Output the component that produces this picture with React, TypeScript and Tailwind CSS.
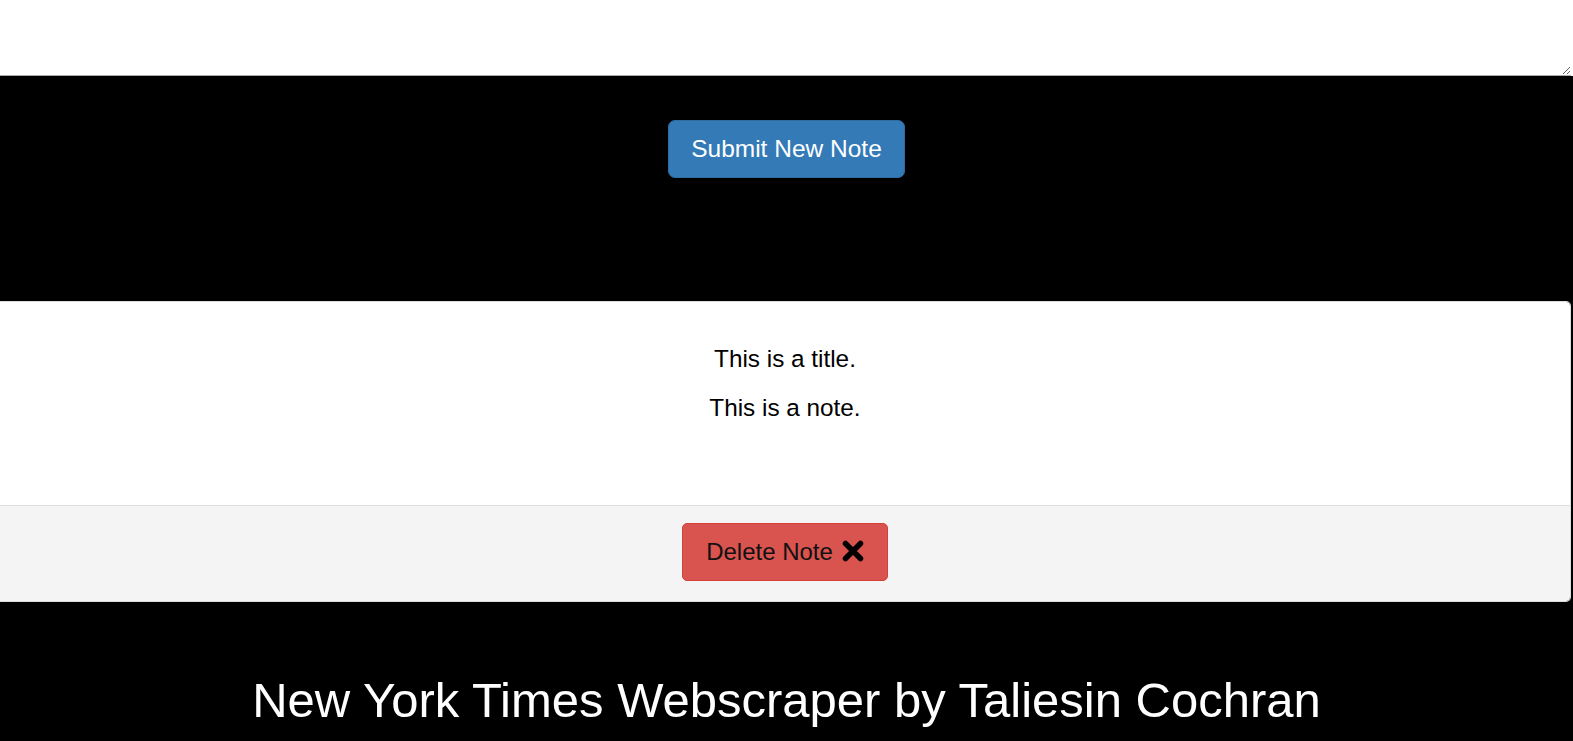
export default function App() {
  return (
    <div className="min-h-screen bg-black text-black" style={{ fontFamily: '"Liberation Sans", Arial, sans-serif' }}>
      <div className="pr-[2px] bg-white">
        <textarea
          className="block w-full h-[76px] bg-white border-0 border-b border-[#aaaaaa] outline-none resize-y"
          defaultValue=""
        />
      </div>
      <div className="bg-black flex justify-center pt-[44px] h-[225px]">
        <button className="h-[58px] px-[22px] rounded-[7px] bg-[#337ab7] border border-[#2e6da4] text-white text-[24.5px] leading-none">
          Submit New Note
        </button>
      </div>
      <div className="mr-[2px] border border-l-0 border-[#dddddd] rounded-r-[5px] overflow-hidden">
        <div className="bg-white h-[203px] pt-[40px] text-center text-[24.3px] leading-[34px]">
          <p className="mb-[15px]">This is a title.</p>
          <p>This is a note.</p>
        </div>
        <div className="bg-[#f4f4f4] border-t border-[#dddddd] h-[96px] pt-[17px] flex justify-center">
          <button className="h-[58px] w-[206px] rounded-[5px] bg-[#d9534f] border border-[#d43f3a] text-[#111111] text-[24px] leading-none flex items-center justify-center gap-[9px]">
            <span>Delete Note</span>
            <svg width="22" height="22" viewBox="0 0 22 22" className="mt-[-2px]">
              <path d="M3.5 3.5 L18.5 18.5 M18.5 3.5 L3.5 18.5" stroke="#000" strokeWidth="5.5" strokeLinecap="round" />
            </svg>
          </button>
        </div>
      </div>
      <div className="bg-black text-white text-center pt-[70px] pb-[20px]">
        <h1 className="text-[49px] leading-[56px]">New York Times Webscraper by Taliesin Cochran</h1>
      </div>
    </div>
  );
}
